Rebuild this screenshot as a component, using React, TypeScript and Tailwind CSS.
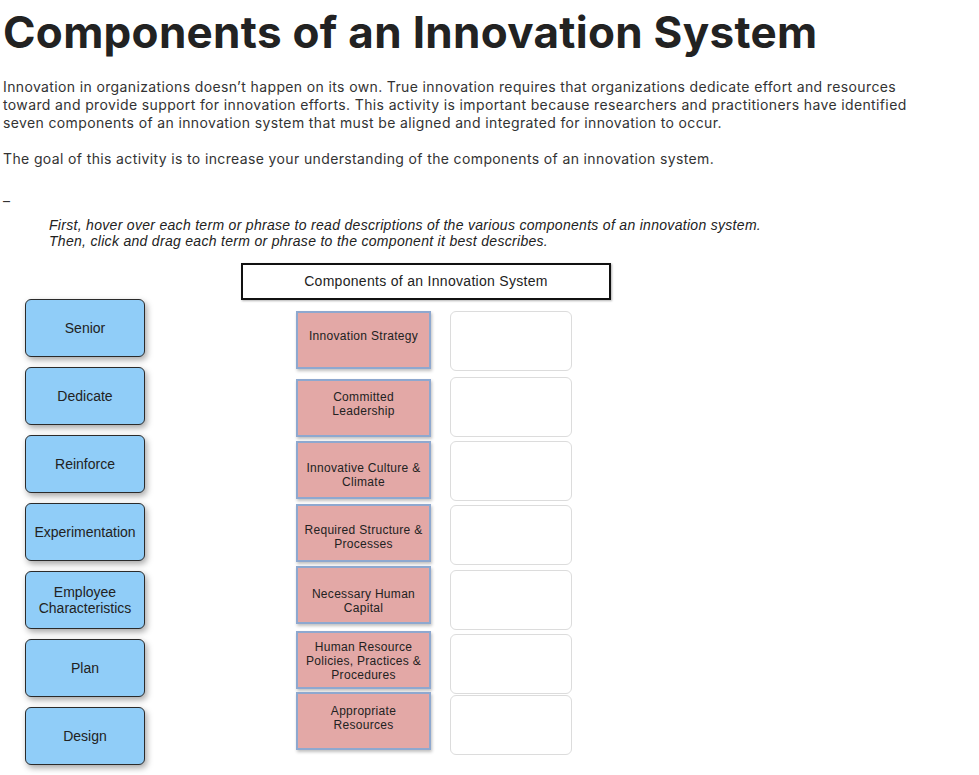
import React from 'react';

const terms = ['Senior', 'Dedicate', 'Reinforce', 'Experimentation', 'Employee Characteristics', 'Plan', 'Design'];

const components = [
  { label: 'Innovation Strategy', box: 'mt-0', text: 'pt-[16px]' },
  { label: 'Committed\nLeadership', box: 'mt-[10px]', text: 'pt-[9px]' },
  { label: 'Innovative Culture &\nClimate', box: 'mt-[4px]', text: 'pt-[18px]' },
  { label: 'Required Structure &\nProcesses', box: 'mt-[5px]', text: 'pt-[17px]' },
  { label: 'Necessary Human\nCapital', box: 'mt-[4px]', text: 'pt-[19px]' },
  { label: 'Human Resource\nPolicies, Practices &\nProcedures', box: 'mt-[7px]', text: 'pt-[7px]' },
  { label: 'Appropriate\nResources', box: 'mt-[3px]', text: 'pt-[10px]' },
];

const slotGaps = ['mt-0', 'mt-[6px]', 'mt-[4px]', 'mt-[4px]', 'mt-[5px]', 'mt-[4px]', 'mt-[1px]'];

export default function App() {
  return (
    <div className="min-h-[775px] bg-white text-[#333] font-['Inter',sans-serif]">
      <h1 className="pl-[3px] pt-[6px] text-[44px] leading-[52px] font-bold tracking-[0.3px] text-[#222]">
        Components of an Innovation System
      </h1>

      <div className="mt-[20px] pl-[3px] text-[14px] leading-[18px] tracking-[0.37px] text-[#333]">
        <p>
          Innovation in organizations doesn’t happen on its own. True innovation requires that organizations dedicate effort and resources
          <br />
          toward and provide support for innovation efforts. This activity is important because researchers and practitioners have identified
          <br />
          seven components of an innovation system that must be aligned and integrated for innovation to occur.
        </p>
        <p className="mt-[18px]">
          The goal of this activity is to increase your understanding of the components of an innovation system.
        </p>
        <p className="mt-[24px] leading-[18px]">–</p>
      </div>

      <div className="mt-[7px] pl-[49px] font-['Liberation_Sans',Arial,sans-serif] italic text-[14px] tracking-[0.3px] leading-[16px] text-[#222]">
        First, hover over each term or phrase to read descriptions of the various components of an innovation system.
        <br />
        Then, click and drag each term or phrase to the component it best describes.
      </div>

      <div className="mt-[14px] flex font-['Liberation_Sans',Arial,sans-serif] text-[#222]">
        <div className="ml-[25px] mt-[36px] flex w-[120px] flex-col gap-[10px]">
          {terms.map((t) => (
            <div
              key={t}
              className="flex h-[58px] items-center justify-center rounded-[6px] border border-[#2b2b2b] bg-[#90cdf8] px-1 text-center text-[14px] leading-[16px] shadow-[2px_3px_6px_rgba(0,0,0,0.35)]"
            >
              {t}
            </div>
          ))}
        </div>

        <div className="ml-[96px] flex flex-col">
          <div className="flex h-[37px] w-[370px] items-center justify-center border-2 border-[#111] text-[14px] tracking-[0.3px] shadow-[1px_1px_2px_rgba(0,0,0,0.3)]">
            Components of an Innovation System
          </div>

          <div className="mt-[11px] flex">
            <div className="ml-[55px] flex w-[135px] flex-col">
              {components.map((c) => (
                <div
                  key={c.label}
                  className={`${c.box} h-[58px] border-2 border-[#8ea8cf] bg-[#e3a8a6] shadow-[1px_2px_3px_rgba(0,0,0,0.25)]`}
                >
                  <div className={`${c.text} whitespace-pre-line text-center text-[12px] leading-[14px] tracking-[0.3px]`}>{c.label}</div>
                </div>
              ))}
            </div>

            <div className="ml-[19px] flex w-[122px] flex-col">
              {slotGaps.map((g, i) => (
                <div key={i} className={`${g} h-[60px] rounded-[6px] border border-[#dcdcdc] bg-white`} />
              ))}
            </div>
          </div>
        </div>
      </div>
    </div>
  );
}
